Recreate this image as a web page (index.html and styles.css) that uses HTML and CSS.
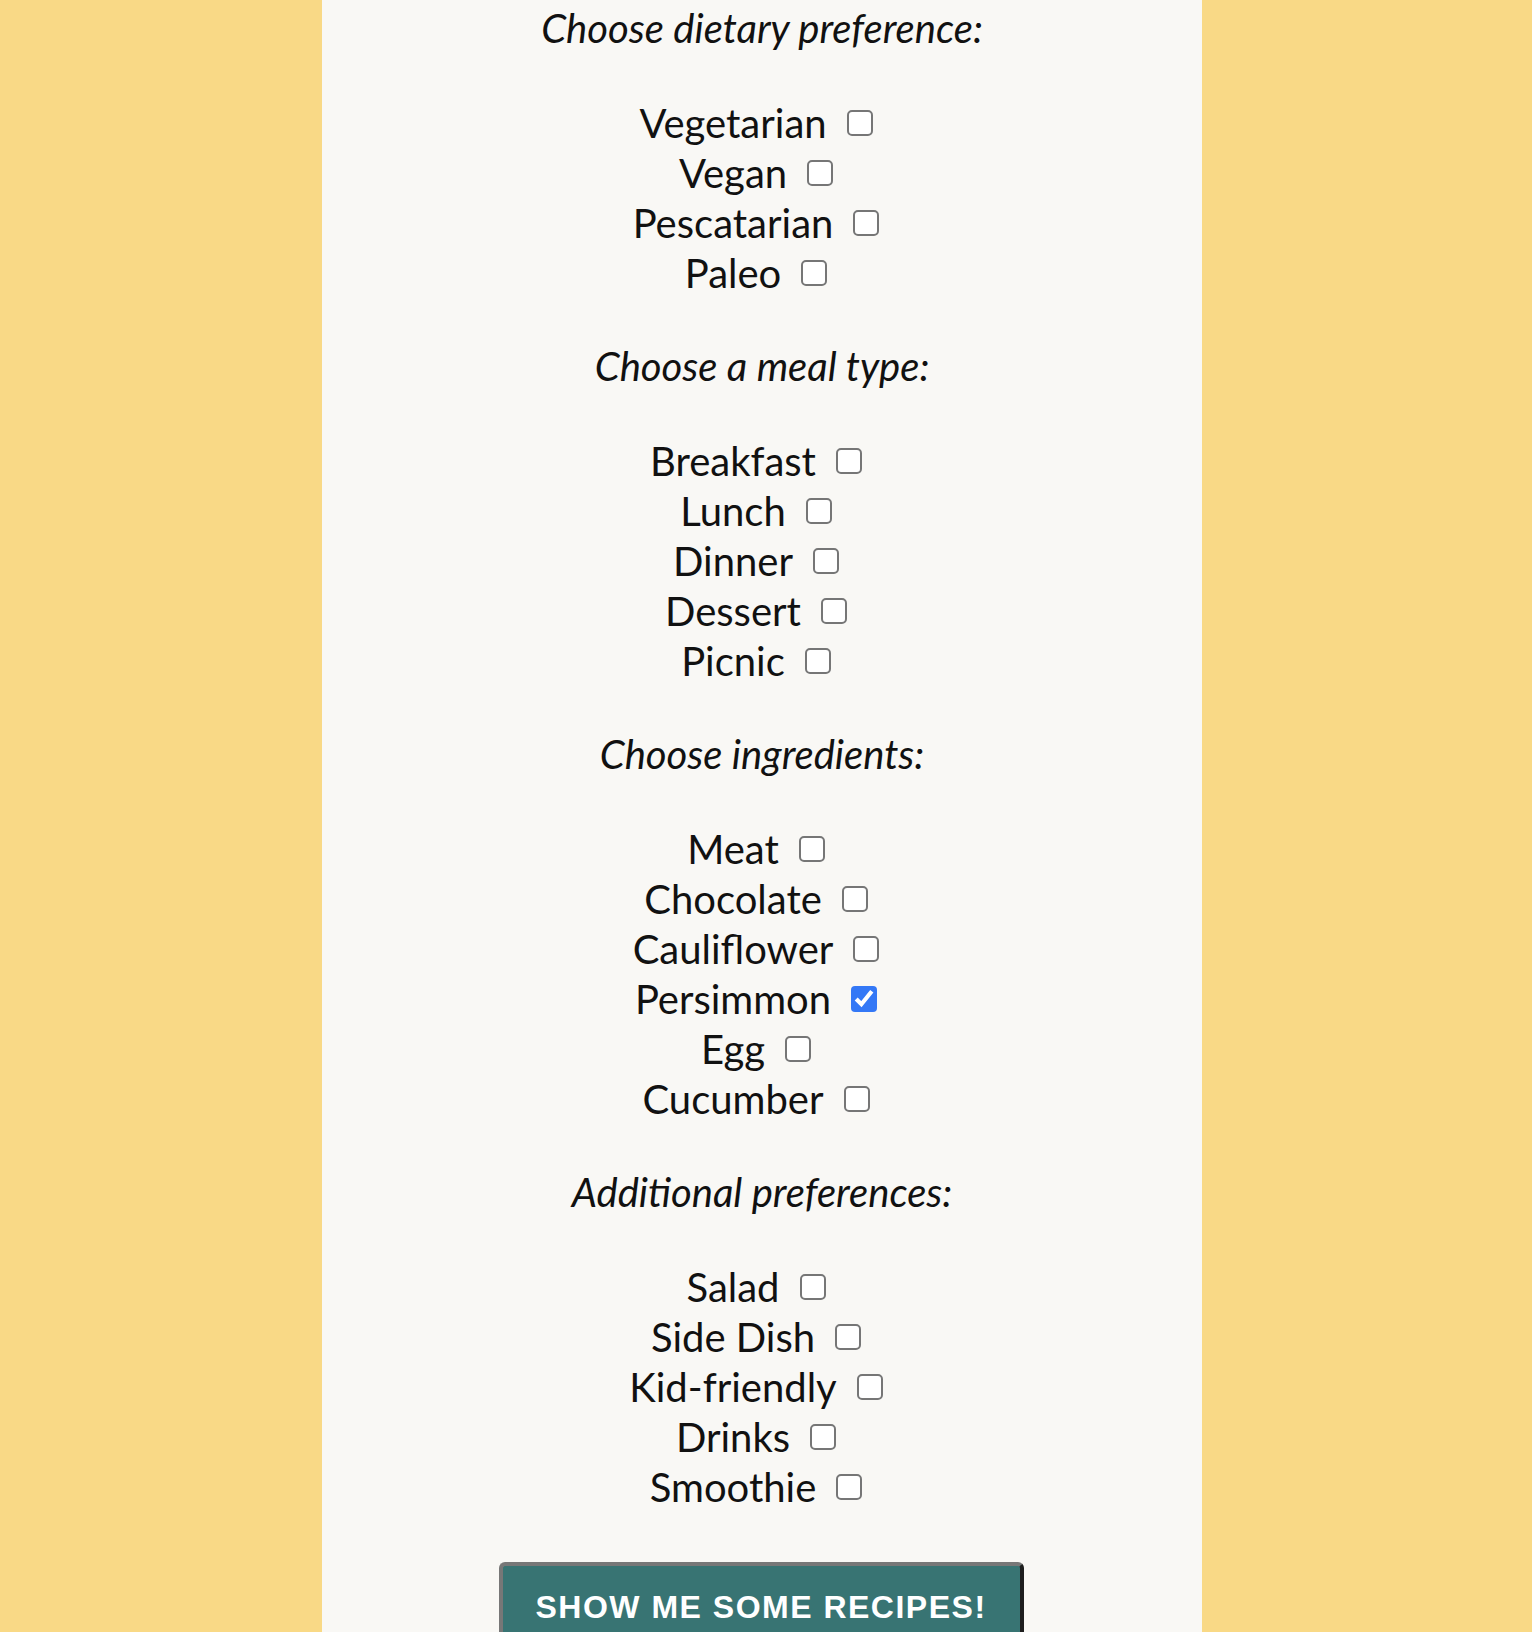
FILE: index.html
```html
<!DOCTYPE html>
<html lang="en">
<head>
<meta charset="utf-8">
<title>Recipe finder</title>
<link rel="stylesheet" href="styles.css">
</head>
<body>
<div class="wrap">
  <main class="panel">
    <form class="form">
      <section class="group">
        <h3 class="group-title">Choose dietary preference:</h3>
        <label class="opt"><span>Vegetarian</span><input type="checkbox" class="box"></label>
        <label class="opt"><span>Vegan</span><input type="checkbox" class="box"></label>
        <label class="opt"><span>Pescatarian</span><input type="checkbox" class="box"></label>
        <label class="opt"><span>Paleo</span><input type="checkbox" class="box"></label>
      </section>
      <section class="group">
        <h3 class="group-title">Choose a meal type:</h3>
        <label class="opt"><span>Breakfast</span><input type="checkbox" class="box"></label>
        <label class="opt"><span>Lunch</span><input type="checkbox" class="box"></label>
        <label class="opt"><span>Dinner</span><input type="checkbox" class="box"></label>
        <label class="opt"><span>Dessert</span><input type="checkbox" class="box"></label>
        <label class="opt"><span>Picnic</span><input type="checkbox" class="box"></label>
      </section>
      <section class="group">
        <h3 class="group-title">Choose ingredients:</h3>
        <label class="opt"><span>Meat</span><input type="checkbox" class="box"></label>
        <label class="opt"><span>Chocolate</span><input type="checkbox" class="box"></label>
        <label class="opt"><span>Cauliflower</span><input type="checkbox" class="box"></label>
        <label class="opt"><span>Persimmon</span><input type="checkbox" class="box" checked></label>
        <label class="opt"><span>Egg</span><input type="checkbox" class="box"></label>
        <label class="opt"><span>Cucumber</span><input type="checkbox" class="box"></label>
      </section>
      <section class="group">
        <h3 class="group-title">Additional preferences:</h3>
        <label class="opt"><span>Salad</span><input type="checkbox" class="box"></label>
        <label class="opt"><span>Side Dish</span><input type="checkbox" class="box"></label>
        <label class="opt"><span>Kid-friendly</span><input type="checkbox" class="box"></label>
        <label class="opt"><span>Drinks</span><input type="checkbox" class="box"></label>
        <label class="opt"><span>Smoothie</span><input type="checkbox" class="box"></label>
      </section>
      <div class="actions">
        <button type="button" class="submit">SHOW ME SOME RECIPES!</button>
      </div>
    </form>
  </main>
</div>
</body>
</html>
```

FILE: styles.css
```css
html, body {
  margin: 0;
  padding: 0;
}

body {
  background: #f9d986;
  font-family: Lato, "Open Sans", "Liberation Sans", sans-serif;
  color: #111;
}

.wrap {
  display: flex;
  justify-content: center;
  padding-right: 8px;
  min-height: 100vh;
}

.panel {
  width: 880px;
  background: #f9f8f5;
  min-height: 1632px;
}

.form {
  display: flex;
  flex-direction: column;
}

.group {
  display: flex;
  flex-direction: column;
  margin-bottom: 40px;
}

.group-title {
  margin: 0 0 47px 0;
  padding-top: 5px;
  font-size: 40px;
  line-height: 46px;
  font-style: italic;
  font-weight: 400;
  text-align: center;
}

.opt {
  display: flex;
  justify-content: center;
  align-items: center;
  height: 50px;
  padding-right: 8px;
  font-size: 40px;
  line-height: 50px;
  gap: 20px;
}

.box {
  zoom: 2;
  margin: 0 2px 0 0;
  accent-color: #3478f6;
}

.actions {
  display: flex;
  justify-content: center;
  padding-top: 10px;
  padding-right: 2px;
}

.submit {
  width: 525px;
  border-style: solid;
  border-width: 4px;
  border-color: #777 #1e1e1e #1e1e1e #777;
  border-radius: 6px;
  background: #387473;
  color: #fff;
  font-family: "Liberation Sans", Arial, sans-serif;
  font-weight: 700;
  font-size: 32px;
  letter-spacing: 1.5px;
  padding: 23px 0;
  line-height: normal;
  text-align: center;
}
```
